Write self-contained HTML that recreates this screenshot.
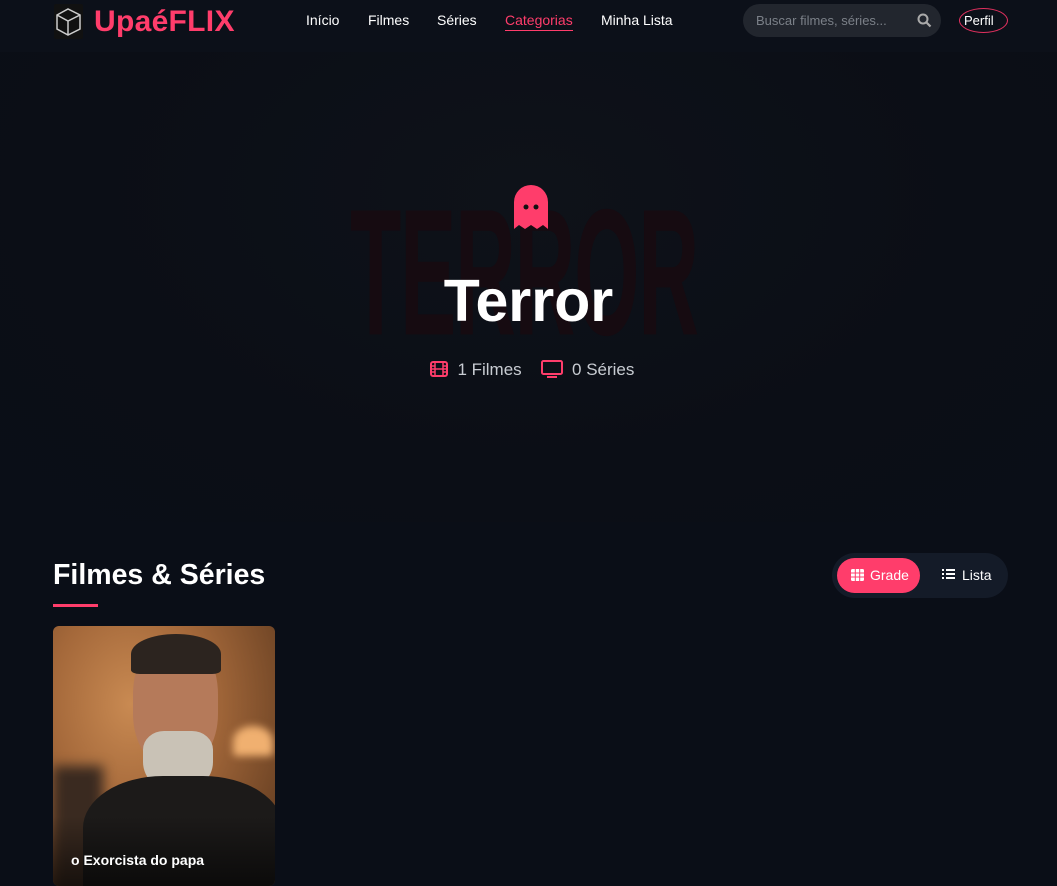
<!DOCTYPE html>
<html><head><meta charset="utf-8"><style>
*{margin:0;padding:0;box-sizing:border-box}
body{width:1057px;height:873px;overflow:hidden;background:#0a0e17;font-family:"Liberation Sans",sans-serif;color:#fff;position:relative}
.hdr{position:absolute;top:0;left:0;width:1057px;height:52px;background:#0c1019;z-index:5}
.logo{position:absolute;left:54px;top:4px;width:29px;height:35px;background:#111;border-radius:2px}
.brand{position:absolute;left:94px;top:5px;font-size:30px;font-weight:bold;color:#ff3d6b;letter-spacing:.3px}
.nav a{position:absolute;top:12px;font-size:14px;color:#fff;text-decoration:none}
.search{position:absolute;left:743px;top:4px;width:198px;height:33px;border-radius:17px;background:#22262e;color:#7b8088;font-size:13px;padding:9px 0 0 13px}
.perf{position:absolute;left:959px;top:8px;width:49px;height:25px;border:1px solid #e0305e;border-radius:50%;font-size:13px;padding:4px 0 0 4px;color:#fff}
.hero{position:absolute;top:52px;left:0;width:1057px;height:470px;background:radial-gradient(ellipse at 50% 30%,#0e1219 0%,#0b0e16 60%,#0a0e17 100%);overflow:hidden}
.bgt{position:absolute;left:350px;top:130px;font-size:150px;font-weight:bold;color:#160b11;letter-spacing:-2px;transform:scale(0.56,1.2);transform-origin:left top;line-height:1}
h1{position:absolute;left:0;width:1057px;text-align:center;top:216px;font-size:59px;font-weight:bold;line-height:1.15}
.meta{position:absolute;left:430px;top:308px;font-size:17px;color:#c8ccd2}
h2{position:absolute;left:53px;top:559px;font-size:28.5px;font-weight:bold}
.ul{position:absolute;left:53px;top:604px;width:45px;height:3px;background:#ff3d6b}
.tog{position:absolute;left:832px;top:553px;width:176px;height:45px;border-radius:23px;background:#141b28}
.g{position:absolute;left:5px;top:5px;width:83px;height:35px;border-radius:18px;background:#ff3d6b;font-size:14px;padding:9px 0 0 33px}
.l{position:absolute;left:130px;top:14px;font-size:14px}
.card{position:absolute;left:53px;top:626px;width:222px;height:260px;border-radius:6px;overflow:hidden;background:radial-gradient(ellipse at 35% 30%,#c98a52 0%,#a4683a 40%,#6e4425 80%)}
</style></head><body>
<div class="hdr">
<div class="logo"><svg width="29" height="35" viewBox="0 0 29 35"><g fill="none" stroke="#ccc" stroke-width="1.5"><path d="M3 11 L14 5 L26 11 L26 25 L14 31 L3 25 Z M3 11 L14 17 L26 11 M14 17 V31"/></g></svg></div>
<div class="brand">UpaéFLIX</div>
<div class="nav"><a style="left:306px">Início</a><a style="left:368px">Filmes</a><a style="left:437px">Séries</a><a style="left:505px;color:#ff3d6b;border-bottom:1px solid #ff3d6b;padding-bottom:2px">Categorias</a><a style="left:601px">Minha Lista</a></div>
<div class="search">Buscar filmes, séries...<svg style="position:absolute;right:9px;top:9px" width="15" height="15" viewBox="0 0 15 15"><circle cx="6" cy="6" r="4.5" fill="none" stroke="#aaa" stroke-width="2"/><path d="M9.5 9.5 L13.5 13.5" stroke="#aaa" stroke-width="2.2"/></svg></div>
<div class="perf">Perfil</div>
</div>
<div class="hero">
<div class="bgt">TERROR</div>
<svg style="position:absolute;left:514px;top:133px" width="34" height="45" viewBox="0 0 34 45"><path d="M0 17 A17 17 0 0 1 34 17 V44 L29 40 L23 44 L17 40 L11 44 L5 40 L0 44 Z" fill="#ff3d6b"/><circle cx="12" cy="22" r="2.5" fill="#111"/><circle cx="22" cy="22" r="2.5" fill="#111"/></svg>
<h1>Terror</h1>
<div class="meta"><svg width="18" height="16" viewBox="0 0 18 16" style="vertical-align:-2px"><rect x="1" y="1" width="16" height="14" rx="2" fill="none" stroke="#ff3d6b" stroke-width="2"/><path d="M5 1V15M13 1V15M1 8H17M1 5H5M1 11H5M13 5H17M13 11H17" stroke="#ff3d6b" stroke-width="1.5"/></svg>&nbsp; 1 Filmes &nbsp;&nbsp; <svg width="22" height="18" viewBox="0 0 22 18" style="vertical-align:-3px"><rect x="1" y="1" width="20" height="13" rx="1.5" fill="none" stroke="#ff3d6b" stroke-width="2"/><path d="M6 17H16" stroke="#ff3d6b" stroke-width="2"/></svg>&nbsp; 0 Séries</div>
</div>
<h2>Filmes &amp; Séries</h2><div class="ul"></div>
<div class="tog"><div class="g"><svg style="position:absolute;left:14px;top:11px" width="13" height="12" viewBox="0 0 13 12"><rect width="13" height="12" rx="1.5" fill="#fff"/><path d="M0 4H13M0 8H13M4.3 0V12M8.7 0V12" stroke="#ff3d6b" stroke-width="1"/></svg>Grade</div><div class="l"><svg style="position:absolute;left:-20px;top:1px" width="13" height="12" viewBox="0 0 13 12"><path d="M0 2H2M4 2H13M0 6H2M4 6H13M0 10H2M4 10H13" stroke="#fff" stroke-width="2"/></svg>Lista</div></div>
<div class="card">
<div style="position:absolute;left:180px;top:100px;width:40px;height:30px;border-radius:50% 50% 10% 10%;background:#f0b070;filter:blur(4px)"></div>
<div style="position:absolute;left:0;top:140px;width:50px;height:130px;background:#3a2a20;filter:blur(6px)"></div>
<div style="position:absolute;left:80px;top:10px;width:85px;height:130px;border-radius:45% 45% 40% 40%;background:#b57a5a"></div>
<div style="position:absolute;left:78px;top:8px;width:90px;height:40px;border-radius:50% 50% 10% 10%;background:#2c241f"></div>
<div style="position:absolute;left:90px;top:105px;width:70px;height:62px;border-radius:30% 30% 50% 50%;background:#c9c2b6"></div>
<div style="position:absolute;left:30px;top:150px;width:200px;height:130px;border-radius:40% 40% 0 0;background:#1c1a19"></div>
<div style="position:absolute;left:0;bottom:0;width:222px;height:70px;background:linear-gradient(transparent,rgba(0,0,0,.6))"></div>
<div style="position:absolute;left:18px;top:226px;font-size:14px;font-weight:bold">o Exorcista do papa</div>
</div>
</body></html>
